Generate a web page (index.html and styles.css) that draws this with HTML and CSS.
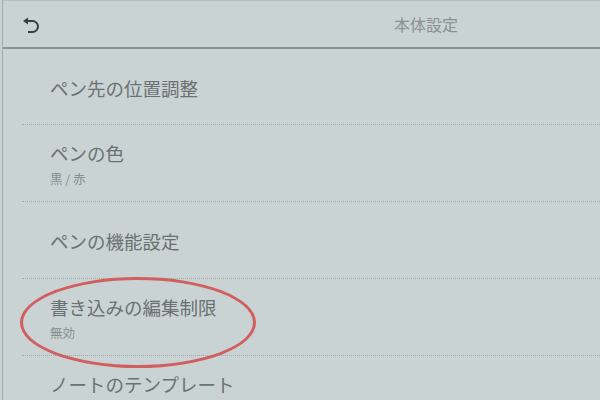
FILE: index.html
```html
<!DOCTYPE html>
<html lang="ja">
<head>
  <meta charset="UTF-8" />
  <meta name="viewport" content="width=device-width, initial-scale=1.0"/>
  <title>本体設定</title>
  <link rel="stylesheet" href="styles.css">
</head>
<body>

  <div class="screen">
    <div class="top-bar">
      <button class="back-btn" aria-label="戻る">
        <svg width="16" height="18" viewBox="0 0 16 18">
          <polygon points="0,4 5,0.5 5,7.5" fill="#3a3d3e"/>
          <path d="M4 4 H9.5 a5.5 5.5 0 0 1 0 11 H5" fill="none" stroke="#3a3d3e" stroke-width="2"/>
        </svg>
      </button>
      <h1 class="page-title">本体設定</h1>
    </div>

    <ul class="settings-list">
      <li class="setting-item">
        <span class="item-title">ペン先の位置調整</span>
      </li>
      <li class="setting-item">
        <span class="item-title">ペンの色</span>
        <span class="item-value">黒 / 赤</span>
      </li>
      <li class="setting-item">
        <span class="item-title">ペンの機能設定</span>
      </li>
      <li class="setting-item">
        <span class="item-title">書き込みの編集制限</span>
        <span class="item-value">無効</span>
      </li>
      <li class="setting-item two-line">
        <span class="item-title">ノートのテンプレート</span>
      </li>
    </ul>

    <!-- red circle drawn over the screen -->
    <div class="highlight"></div>
  </div>

</body>
</html>
```

FILE: styles.css
```css
body {
  margin: 0;
  background: #c9d3d3;
  font-family: "Noto Sans CJK JP", "Noto Sans", sans-serif;
  overflow: hidden;
}

.screen {
  position: relative;
  height: 400px;
  margin-left: 2px;
  border-left: 1px solid #a3abad;
  border-top: 1px solid #b5bdbf;
  background: #c9d3d3;
}

.top-bar {
  display: flex;
  align-items: center;
  height: 46px;
  border-bottom: 2px solid #8c9396;
}

.back-btn {
  margin-left: 20px;
  padding: 0;
  border: none;
  background: none;
  display: flex;
  margin-top: 4px;
}

.page-title {
  margin: 0 0 0 355px;
  font-size: 16px;
  font-weight: normal;
  color: #8a9193;
}

.settings-list {
  list-style: none;
  margin: 0;
  padding: 0;
}

.setting-item {
  display: flex;
  flex-direction: column;
  justify-content: center;
  height: 76px;
  margin-left: 19px;
  padding-left: 28px;
  border-bottom: 1px dotted #a3abad;
  box-sizing: border-box;
  padding-top: 2px;
}

.setting-item + .setting-item {
  height: 77px;
}

/* row whose value line is below the bottom edge */
.setting-item.two-line {
  padding-bottom: 22px;
}

.item-title {
  font-size: 18.5px;
  color: #6b7173;
  line-height: 26px;
}

.item-value {
  font-size: 12.5px;
  color: #868d8f;
  line-height: 18px;
  margin-top: 4px;
}

.highlight {
  position: absolute;
  left: 17px;
  top: 276px;
  width: 236px;
  height: 91px;
  border: 3px solid #d25e5e;
  border-radius: 50%;
  box-sizing: border-box;
}
```
